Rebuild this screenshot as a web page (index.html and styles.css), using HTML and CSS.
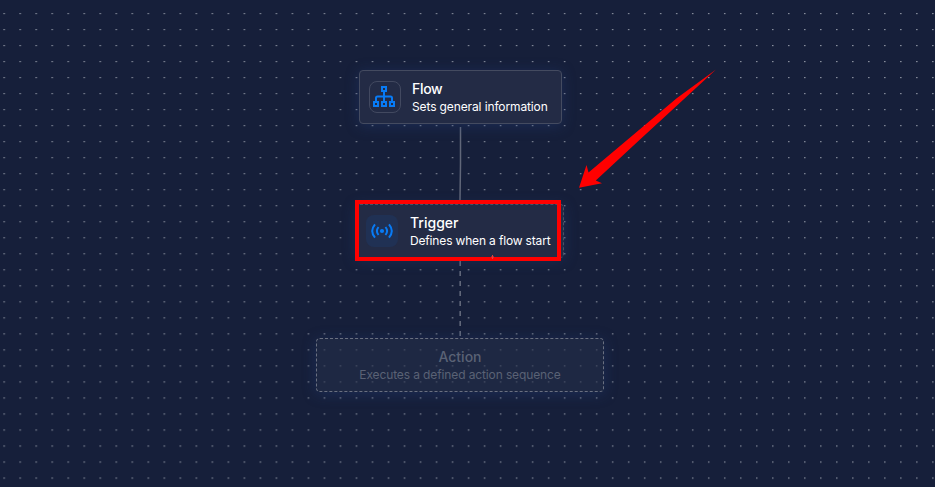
FILE: index.html
```
<!DOCTYPE html>
<html lang="en">
<head>
<meta charset="utf-8">
<title>Flow editor</title>
<link rel="stylesheet" href="styles.css">
</head>
<body>
<main class="canvas">
  <svg class="layer" width="935" height="487" aria-hidden="true">
    <defs>
      <pattern id="dots" x="3.4" y="13" width="16.012" height="16.017" patternUnits="userSpaceOnUse">
        <rect width="1.5" height="1.1" fill="#8b91a0"/>
      </pattern>
    </defs>
    <rect width="935" height="487" fill="url(#dots)"/>
    <path d="M460.5 127V164L460 200" fill="none" stroke="#616779" stroke-width="1.5"/>
    <path d="M460.2 261V336" stroke="#616779" stroke-width="1.6" stroke-dasharray="5 5"/>
  </svg>

  <section class="node flow">
    <div class="icon framed">
      <svg width="24" height="24" viewBox="0 0 24 24" fill="none" stroke="#087bf5" stroke-width="2">
        <path d="M9 2h4v4H9zM1 17h4v4H1zM9 17h4v4H9zM17 17h4v4h-4zM11 6v11M3 17v-4q0-1.5 1.5-1.5h13q1.5 0 1.5 1.5v4"/>
      </svg>
    </div>
    <div class="text"><h2>Flow</h2><p>Sets general information</p></div>
  </section>

  <section class="node trigger">
    <div class="icon tinted">
      <svg width="24" height="24" viewBox="0 0 24 24" fill="none" stroke="#087bf5" stroke-width="2">
        <circle cx="12" cy="12" r="2.1" fill="#087bf5" stroke="none"/>
        <path d="M8.5 8q-3.2 4 0 8M15.5 8q3.2 4 0 8M5 5.4q-5.6 6.6 0 13.2M19 5.4q5.6 6.6 0 13.2"/>
      </svg>
    </div>
    <div class="text"><h2>Trigger</h2><p>Defines when a flow start</p></div>
  </section>

  <section class="node action">
    <div class="text"><h2>Action</h2><p>Executes a defined action sequence</p></div>
  </section>

  <div class="highlight"></div>
  <svg class="layer" width="935" height="487" aria-hidden="true">
    <path d="M716 69.5L677 98 588.5 172.5 586.5 165 579 187.8 602 183.3 595.8 180.5 640 139.5 677 105.5Z" fill="#f00"/>
    <path d="M492.5 255v4M491 257h3" stroke="#e04343" stroke-width="1"/>
  </svg>
</main>
</body>
</html>
```
FILE: styles.css
```
body {
  margin: 0;
  font-family: Inter, "Open Sans", sans-serif;
}

.canvas {
  position: relative;
  width: 935px;
  height: 487px;
  overflow: hidden;
  background: #161f3a;
}

.layer {
  position: absolute;
  inset: 0;
}

.node {
  position: absolute;
  box-sizing: border-box;
  display: flex;
  align-items: center;
  height: 54px;
  border-radius: 4px;
  background: #232b45;
  box-shadow: 0 2px 14px rgba(37, 65, 130, 0.38);
  color: #fff;
}

.flow {
  left: 359px;
  top: 70px;
  width: 203px;
  padding-left: 9px;
  gap: 11px;
  border: 1px solid #444b60;
}

.trigger {
  left: 356px;
  top: 204px;
  width: 208px;
  padding-left: 9px;
  gap: 12px;
  border: 1px dashed #4a5164;
}

.trigger p {
  letter-spacing: -0.16px;
}

.action {
  left: 316px;
  top: 338px;
  width: 288px;
  justify-content: center;
  border: 1px dashed #6a7081;
  background: rgba(37, 46, 73, 0.6);
  color: #5a6275;
  text-align: center;
}

.icon {
  box-sizing: border-box;
  display: flex;
  align-items: center;
  justify-content: center;
  width: 32px;
  height: 32px;
  border-radius: 8px;
}

.framed {
  border: 1px solid #424960;
}

.tinted {
  background: #203154;
}

h2,
p {
  margin: 0;
  white-space: nowrap;
}

h2 {
  font-size: 14px;
  line-height: 18px;
  font-weight: 500;
}

.flow h2 {
  letter-spacing: -0.3px;
}

p {
  font-size: 12px;
  line-height: 17px;
  font-weight: 400;
  letter-spacing: -0.12px;
}

.highlight {
  position: absolute;
  left: 355px;
  top: 200px;
  box-sizing: border-box;
  width: 206px;
  height: 61px;
  border: 4px solid #f00;
}
```
